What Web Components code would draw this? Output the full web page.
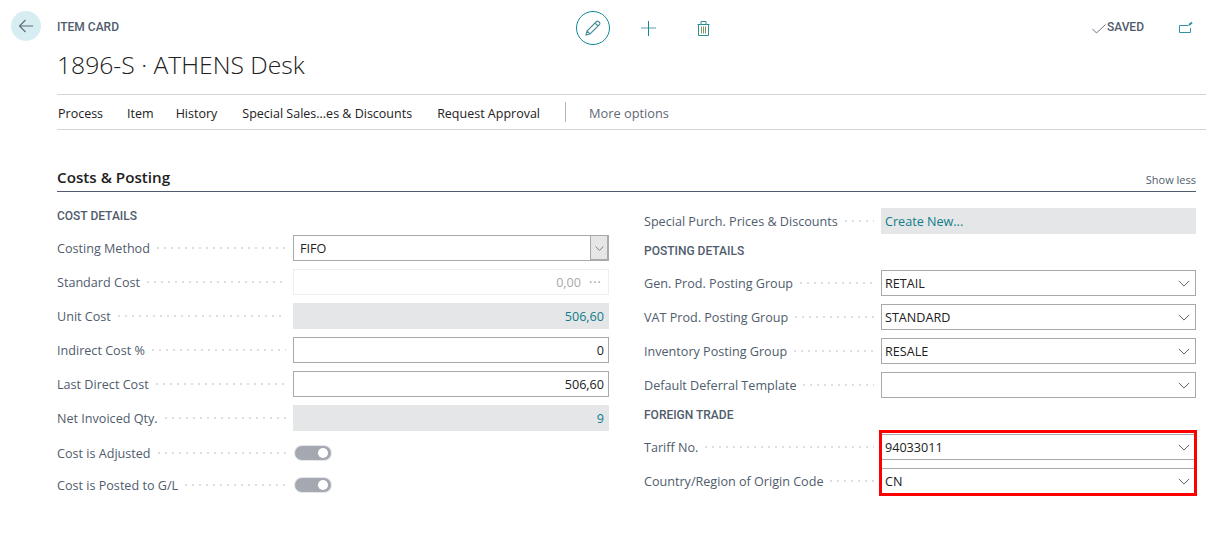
<!DOCTYPE html>
<html lang="en">
<head>
<meta charset="utf-8">
<title>Item Card</title>
<style>
    html, body{
        margin: 0;
        background: #fff;
        font-family: "Open Sans", "Noto Sans", sans-serif;
        font-size: 12.6px;
        color: #212121;
    }
</style>
</head>
<body>
<item-page>
    <page-head slot="head" caption="ITEM CARD" title="1896-S · ATHENS Desk"></page-head>
    <action-bar slot="bar"></action-bar>
    <card-section slot="section" heading="Costs &amp; Posting">
        <div slot="left">
            <group-title first>COST DETAILS</group-title>
            <field-row label="Costing Method" kind="select-open" value="FIFO"></field-row>
            <field-row label="Standard Cost" kind="disabled" value="0,00"></field-row>
            <field-row label="Unit Cost" kind="flow" value="506,60"></field-row>
            <field-row label="Indirect Cost %" kind="number" value="0"></field-row>
            <field-row label="Last Direct Cost" kind="number" value="506,60"></field-row>
            <field-row label="Net Invoiced Qty." kind="flow" value="9"></field-row>
            <field-row label="Cost is Adjusted" kind="toggle" style="margin-top: 2px"></field-row>
            <field-row label="Cost is Posted to G/L" kind="toggle"></field-row>
        </div>
        <div slot="right" style="--label-width: 237px; --box-width: 315px">
            <field-row label="Special Purch. Prices &amp; Discounts" kind="link" value="Create New..."></field-row>
            <group-title>POSTING DETAILS</group-title>
            <field-row label="Gen. Prod. Posting Group" kind="select" value="RETAIL"></field-row>
            <field-row label="VAT Prod. Posting Group" kind="select" value="STANDARD"></field-row>
            <field-row label="Inventory Posting Group" kind="select" value="RESALE"></field-row>
            <field-row label="Default Deferral Template" kind="select" value=""></field-row>
            <group-title>FOREIGN TRADE</group-title>
            <highlight-box>
                <field-row label="Tariff No." kind="select" value="94033011"></field-row>
                <field-row label="Country/Region of Origin Code" kind="select" value="CN"></field-row>
            </highlight-box>
        </div>
    </card-section>
</item-page>

<script>
const chevron = `<svg width="12" height="7" viewBox="0 0 14 8" fill="none" stroke="#4f5a66" stroke-width="1.1"><path d="M1 1l6 6 6-6"/></svg>`;

class ItemPage extends HTMLElement {
    constructor(){
        super();
        this.inner = this.attachShadow({mode: "open"});
        this.inner.innerHTML = `
            <style>
                :host{
                    display: block;
                    width: 1206px;
                    height: 534px;
                    box-sizing: border-box;
                    overflow: hidden;
                }
            </style>
            <slot name="head"></slot>
            <slot name="bar"></slot>
            <slot name="section"></slot>
        `;
    }
}

class PageHead extends HTMLElement {
    constructor(){
        super();
        this.inner = this.attachShadow({mode: "open"});
        this.inner.innerHTML = `
            <style>
                :host{
                    display: grid;
                    grid-template-columns: 57px 519px 1fr auto;
                    height: 94px;
                    box-sizing: border-box;
                    padding-top: 11px;
                }
                .back{
                    width: 30px;
                    height: 30px;
                    margin-left: 11px;
                    border-radius: 50%;
                    background: #d6eef2;
                    display: flex;
                    align-items: center;
                    justify-content: center;
                }
                .caption{
                    font-family: Roboto, sans-serif;
                    font-size: 12px;
                    font-weight: 500;
                    line-height: 14px;
                    margin-top: 9px;
                    color: #505c6d;
                }
                h1{
                    margin: 13px 0 0;
                    font-size: 24.7px;
                    font-weight: 300;
                    line-height: 36px;
                    color: #212121;
                    white-space: nowrap;
                }
                .tools{
                    display: flex;
                    align-items: flex-start;
                }
                .edit{
                    width: 34px;
                    height: 34px;
                    border: 1px solid #0f8a93;
                    border-radius: 50%;
                    box-sizing: border-box;
                    display: flex;
                    align-items: center;
                    justify-content: center;
                }
                .plus{ margin: 10px 0 0 31px; }
                .bin{ margin: 10px 0 0 41px; }
                .right{
                    display: flex;
                    align-items: flex-start;
                    padding-right: 13px;
                }
                .saved{
                    font-family: Roboto, sans-serif;
                    font-size: 12px;
                    font-weight: 500;
                    line-height: 14px;
                    margin: 9px 35px 0 1px;
                    color: #505c6d;
                }
                .check{ margin-top: 13px; }
                .open{ margin-top: 11px; }
            </style>
            <div class="back">
                <svg width="16" height="14" viewBox="0 0 16 14" fill="none" stroke="#5e6b78" stroke-width="1.1"><path d="M15 7H1.500M7.500 1L1.500 7l6 6"/></svg>
            </div>
            <div>
                <div class="caption">${this.getAttribute('caption')}</div>
                <h1>${this.getAttribute('title')}</h1>
            </div>
            <div class="tools">
                <div class="edit">
                    <svg width="16" height="16" viewBox="0 0 16 16" fill="none" stroke="#4a8f98" stroke-width="1.1"><path d="M1 15l1-4L11.500 1.500a1.400 1.400 0 0 1 2 0l1 1a1.400 1.400 0 0 1 0 2L5 14z M2 11l3 3 M10 3l3 3"/></svg>
                </div>
                <svg class="plus" width="15" height="15" viewBox="0 0 15 15" fill="none" stroke-width="1"><path d="M0 7h15" stroke="#5a9ea6"/><path d="M7.500 0v15" stroke="#0f8a93"/></svg>
                <svg class="bin" width="13" height="15" viewBox="0 0 13 15" fill="none" stroke="#2f8f8f" stroke-width="1"><path d="M.5 3.500h12M4 3.500V.5h5v3M1.500 3.500v11h10v-11"/><path d="M4.500 5.500v7M6.500 5.500v7M8.500 5.500v7" stroke="#7f9464"/></svg>
            </div>
            <div class="right">
                <svg class="check" width="14" height="10" viewBox="0 0 14 10" fill="none" stroke="#6b7480" stroke-width="1"><path d="M.5 5l4 4 9-8.500"/></svg>
                <div class="saved">SAVED</div>
                <svg class="open" width="14" height="11" viewBox="0 0 14 11" fill="none" stroke="#2e93a3" stroke-width="1"><path d="M.5 3.500h9M.5 3.500v7h11V6"/><path d="M10 3l3-2.500" stroke-width="2"/></svg>
            </div>
        `;
    }
}

class ActionBar extends HTMLElement {
    constructor(){
        super();
        this.inner = this.attachShadow({mode: "open"});
        this.inner.innerHTML = `
            <style>
                :host{
                    display: flex;
                    align-items: center;
                    height: 36px;
                    box-sizing: border-box;
                    margin-left: 57px;
                    border-top: 1px solid #d5d5d9;
                    border-bottom: 1px solid #d5d5d9;
                    padding: 2px 0 0 1px;
                    color: #212121;
                    white-space: nowrap;
                    font-size: 12.5px;
                }
                span{ margin-right: 25px; }
                .process{ margin-right: 24px; }
                .item{ margin-right: 22px; }
                i{
                    width: 1px;
                    height: 20px;
                    margin: -2px 23px 0 0;
                    background: #b4b4b8;
                }
                .more{
                    color: #5f6875;
                    font-size: 12.8px;
                }
            </style>
            <span class="process">Process</span><span class="item">Item</span><span>History</span>
            <span>Special Sales...es &amp; Discounts</span><span>Request Approval</span>
            <i></i><span class="more">More options</span>
        `;
    }
}

class CardSection extends HTMLElement {
    constructor(){
        super();
        this.inner = this.attachShadow({mode: "open"});
        this.inner.innerHTML = `
            <style>
                :host{
                    display: block;
                    margin: 35px 10px 0 57px;
                }
                header{
                    display: flex;
                    justify-content: space-between;
                    align-items: flex-end;
                    height: 27px;
                    box-sizing: border-box;
                    border-bottom: 1px solid #505c6d;
                }
                h2{
                    margin: 0;
                    padding-bottom: 1px;
                    font-size: 15.2px;
                    font-weight: 600;
                    line-height: 25px;
                    color: #212121;
                }
                a{
                    font-size: 11px;
                    line-height: 22px;
                    color: #505c6d;
                }
                .cols{
                    display: grid;
                    grid-template-columns: 552px 552px;
                    column-gap: 35px;
                    padding-top: 12px;
                }
            </style>
            <header><h2>${this.getAttribute('heading')}</h2><a>Show less</a></header>
            <div class="cols"><slot name="left"></slot><slot name="right"></slot></div>
        `;
    }
}

class GroupTitle extends HTMLElement {
    constructor(){
        super();
        this.inner = this.attachShadow({mode: "open"});
        this.inner.innerHTML = `
            <style>
                :host{
                    display: block;
                    height: 28px;
                    box-sizing: border-box;
                    padding-top: 6px;
                    font-family: Roboto, sans-serif;
                    font-size: 12px;
                    font-weight: 500;
                    line-height: 14px;
                    color: #505c6d;
                }
                :host([first]){
                    height: 27px;
                    padding-top: 5px;
                }
            </style>
            <slot></slot>
        `;
    }
}

class ToggleSwitch extends HTMLElement {
    constructor(){
        super();
        this.inner = this.attachShadow({mode: "open"});
        this.inner.innerHTML = `
            <style>
                :host{
                    display: flex;
                    justify-content: flex-end;
                    align-items: center;
                    width: 36px;
                    height: 14px;
                    box-sizing: border-box;
                    margin-left: 2px;
                    padding-right: 3px;
                    border-radius: 7px;
                    background: #a4a8b0;
                    box-shadow: 0 0 0 1px #e6e7ea;
                }
                i{
                    width: 10px;
                    height: 10px;
                    border-radius: 50%;
                    background: #fff;
                }
            </style>
            <i></i>
        `;
    }
}

class FieldRow extends HTMLElement {
    constructor(){
        super();
        const kind = this.getAttribute('kind');
        const value = this.getAttribute('value') || '';
        let control = '';
        if (kind === 'toggle') {
            control = `<toggle-switch></toggle-switch>`;
        } else if (kind === 'select-open') {
            control = `<div class="box open"><span>${value}</span><b>${chevron}</b></div>`;
        } else if (kind === 'select') {
            control = `<div class="box sel"><span>${value}</span>${chevron}</div>`;
        } else if (kind === 'disabled') {
            control = `<div class="box dis"><span>${value}</span><em>···</em></div>`;
        } else if (kind === 'flow') {
            control = `<div class="box flow"><span>${value}</span></div>`;
        } else if (kind === 'number') {
            control = `<div class="box num"><span>${value}</span></div>`;
        } else {
            control = `<div class="box link"><span>${value}</span></div>`;
        }
        this.inner = this.attachShadow({mode: "open"});
        this.inner.innerHTML = `
            <style>
                :host{
                    display: grid;
                    grid-template-columns: var(--label-width, 236px) var(--box-width, 316px);
                    align-items: center;
                    height: 34px;
                    font-size: 12.6px;
                }
                :host([kind="toggle"]){ height: 32px; }
                label{
                    display: flex;
                    align-items: center;
                    color: #505c6d;
                    white-space: nowrap;
                    padding-right: 7px;
                }
                label::after{
                    content: "";
                    flex: 1;
                    margin-left: 7px;
                    height: 2px;
                    background: radial-gradient(circle at 1px 1px, #dcdee1 1px, transparent 1px) 0 0 / 7px 2px repeat-x;
                }
                .box{
                    display: flex;
                    align-items: center;
                    justify-content: space-between;
                    height: 26px;
                    box-sizing: border-box;
                    border: 1px solid #a9a9a9;
                    padding: 0 4px 0 3px;
                    color: #212121;
                }
                .sel{ padding-right: 5px; }
                .open{ padding: 0 0 0 6px; }
                .open b{
                    display: flex;
                    align-items: center;
                    justify-content: center;
                    width: 18px;
                    height: 100%;
                    background: #e6e6e6;
                    border-left: 1px solid #a9a9a9;
                    box-sizing: border-box;
                    box-shadow: inset -1px -1px 0 #a9a9a9;
                }
                .open svg{ width: 9px; }
                .dis{
                    justify-content: flex-end;
                    border-color: #eeeeef;
                    color: #a9a9a9;
                }
                .dis em{
                    font-style: normal;
                    letter-spacing: 1px;
                    margin-left: 8px;
                    color: #9a9ea6;
                    width: 15px;
                }
                .flow{
                    justify-content: flex-end;
                    border-color: #e5e6e8;
                    background: #e5e6e8;
                    color: #0f7c8a;
                }
                .num{ justify-content: flex-end; }
                .link{
                    border-color: #e5e6e8;
                    background: #e5e6e8;
                    color: #0f7c8a;
                }
            </style>
            <label>${this.getAttribute('label')}</label>
            ${control}
        `;
    }
}

class HighlightBox extends HTMLElement {
    constructor(){
        super();
        this.inner = this.attachShadow({mode: "open"});
        this.inner.innerHTML = `
            <style>
                :host{
                    display: block;
                    position: relative;
                }
                i{
                    position: absolute;
                    left: 235px;
                    top: 0;
                    width: 318px;
                    height: 66px;
                    box-sizing: border-box;
                    border: 3px solid #f00;
                }
            </style>
            <slot></slot>
            <i></i>
        `;
    }
}

customElements.define('item-page', ItemPage);
customElements.define('page-head', PageHead);
customElements.define('action-bar', ActionBar);
customElements.define('card-section', CardSection);
customElements.define('group-title', GroupTitle);
customElements.define('toggle-switch', ToggleSwitch);
customElements.define('field-row', FieldRow);
customElements.define('highlight-box', HighlightBox);
</script>
</body>
</html>
